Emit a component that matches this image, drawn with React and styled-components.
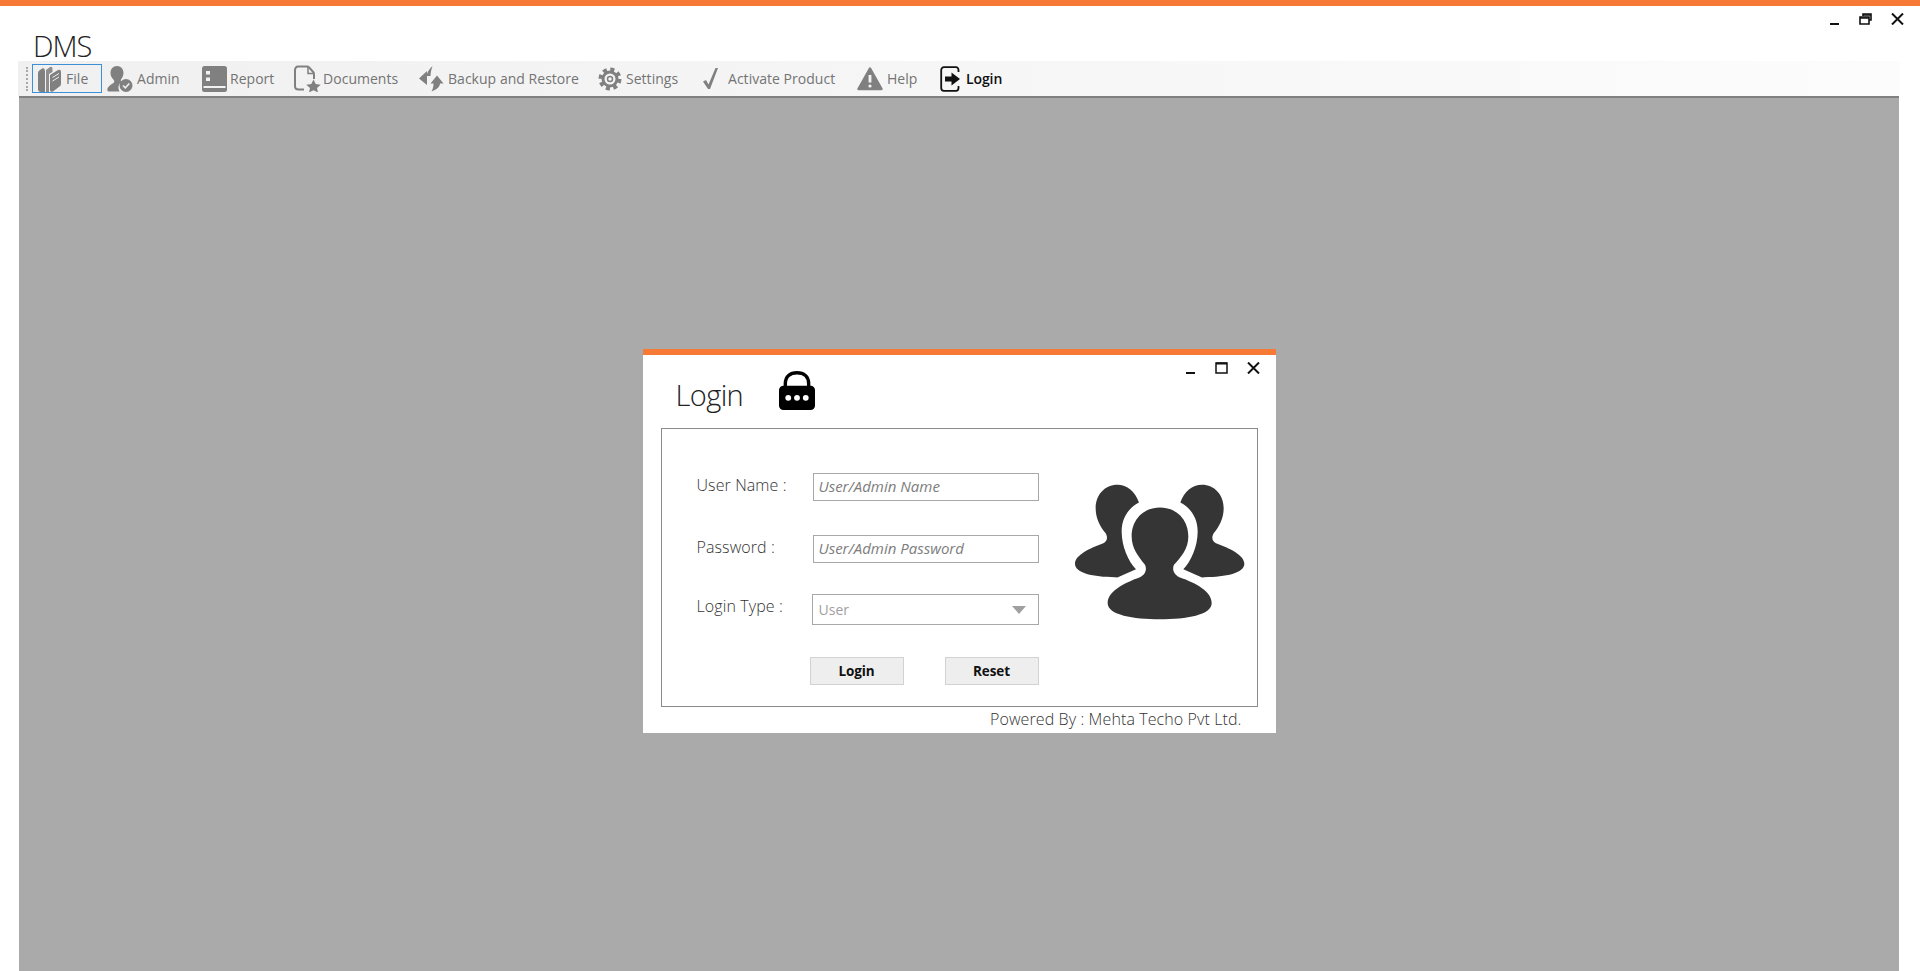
import styled, { createGlobalStyle } from 'styled-components'

const GlobalStyle = createGlobalStyle`
  html, body { margin: 0; padding: 0; background: #fff; }
  * { box-sizing: border-box; }
  body { font-family: "Open Sans", "Liberation Sans", sans-serif; }
`

const Page = styled.div`
  height: 100vh;
  display: flex;
  flex-direction: column;
  overflow: hidden;
  background: #fff;
`

const TopStripe = styled.div`
  height: 6px;
  flex: none;
  background: #f67a36;
`

const TitleRow = styled.div`
  height: 55px;
  flex: none;
  display: flex;
  justify-content: space-between;
  align-items: flex-start;
  padding: 7px 16px 0 33px;
`

const AppTitle = styled.h1`
  margin: 17px 0 0;
  font-size: 29px;
  line-height: 32px;
  font-weight: 300;
  color: #222;
  letter-spacing: -1px;
`

const WindowButtons = styled.div`
  display: flex;
  align-items: flex-start;
  gap: 19px;
`

const Toolbar = styled.div`
  height: 35px;
  flex: none;
  margin: 0 20px 0 18px;
  display: flex;
  align-items: center;
  padding-left: 8px;
  background: linear-gradient(90deg, #f0f0f0, #fcfcfc);
`

const Grip = styled.div`
  width: 2px;
  height: 24px;
  margin-right: 4px;
  border-left: 2px dotted #a8a8a8;
`

const ToolItem = styled.div`
  width: ${p => p.$width}px;
  height: 29px;
  flex: none;
  display: flex;
  align-items: center;
  font-size: 14px;
  color: ${p => (p.$active ? '#111' : '#747474')};
  font-weight: ${p => (p.$active ? 600 : 400)};
  letter-spacing: ${p => (p.$active ? '-0.1px' : '0.03px')};
`

const FileItem = styled(ToolItem)`
  padding-left: 5px;
  margin-right: 5px;
  border: 1.5px solid #3d8fd8;
`

const ToolIcon = styled.span`
  width: ${p => p.$width}px;
  flex: none;
  display: flex;
  align-items: center;
`

const Workspace = styled.main`
  flex: 1;
  margin: 0 21px 0 19px;
  padding-top: 251px;
  display: flex;
  justify-content: center;
  align-items: flex-start;
  background: #aaa;
  border-top: 2px solid #808080;
`

const Dialog = styled.section`
  width: 633px;
  height: 384px;
  display: flex;
  flex-direction: column;
  background: #fff;
  border-top: 6px solid #f67a36;
`

const DialogHead = styled.div`
  height: 73px;
  flex: none;
  display: flex;
  justify-content: space-between;
  align-items: flex-start;
  padding: 7px 16px 0 33px;
`

const DialogTitleGroup = styled.div`
  display: flex;
  align-items: flex-start;
  gap: 36px;
`

const DialogTitle = styled.h2`
  margin: 13px 0 0;
  font-size: 29px;
  line-height: 40px;
  font-weight: 300;
  letter-spacing: -0.6px;
  color: #222;
`

const LockWrap = styled.div`
  margin-top: 9px;
`

const FormBox = styled.div`
  height: 279px;
  margin: 0 18px;
  display: flex;
  align-items: flex-start;
  border: 1.5px solid #8a8a8a;
`

const FormGrid = styled.form`
  margin: 44px 0 0 35px;
  display: grid;
  grid-template-columns: 116px 228px;
  grid-template-rows: 62px 59px 63px 28px;
  align-items: start;
`

const FieldLabel = styled.label`
  font-size: 16px;
  line-height: 25px;
  font-weight: 300;
  color: #333;
  letter-spacing: 0.1px;
`

const TextField = styled.input`
  width: 226px;
  height: 28px;
  padding: 0 5px 2px;
  border: 1.5px solid #a8a8a8;
  outline: none;
  background: #fff;
  font-family: inherit;
  font-size: 15px;
  font-style: italic;
  &::placeholder { color: #7d7d7d; opacity: 1; }
`

const SelectField = styled.div`
  width: 227px;
  height: 31px;
  margin-left: -1px;
  padding: 0 12px 0 6px;
  display: flex;
  justify-content: space-between;
  align-items: center;
  border: 1.5px solid #a8a8a8;
  font-size: 14px;
  color: #a0a0a0;
`

const Caret = styled.span`
  width: 0;
  height: 0;
  border-left: 7px solid transparent;
  border-right: 7px solid transparent;
  border-top: 8px solid #a0a0a0;
`

const ButtonRow = styled.div`
  grid-column: 2;
  display: flex;
  justify-content: space-between;
  margin-left: -3px;
  width: 229px;
`

const ActionButton = styled.button`
  width: 94px;
  height: 28px;
  padding: 0;
  background: #eee;
  border: 1.5px solid #d2d2d2;
  font-family: inherit;
  font-size: 13.5px;
  font-weight: 700;
  letter-spacing: -0.1px;
  color: #111;
`

const PeopleWrap = styled.div`
  margin: 55px 0 0 34px;
`

const PoweredBy = styled.div`
  flex: 1;
  padding: 1px 34px 0 0;
  text-align: right;
  font-size: 16px;
  font-weight: 300;
  letter-spacing: 0.1px;
  color: #333;
`

const ctrl = { stroke: '#111', strokeWidth: 2, fill: 'none' }

const MinimizeIcon = () => (
  <svg width="10" height="13" viewBox="0 0 10 13"><path d="M0 11h9" {...ctrl} /></svg>
)

const CloseIcon = () => (
  <svg width="13" height="12" viewBox="0 0 13 12"><path d="M1 0.5l11 11M12 0.5l-11 11" {...ctrl} /></svg>
)

const RestoreIcon = () => (
  <svg width="13" height="12" viewBox="0 0 13 12">
    <path d="M4 3V1h8v6h-2" {...ctrl} strokeWidth="1.6" />
    <path d="M1 4h9v7H1z" {...ctrl} strokeWidth="1.6" />
    <path d="M1 5h9M4 2h8" {...ctrl} strokeWidth="1.6" />
  </svg>
)

const MaximizeIcon = () => (
  <svg width="13" height="12" viewBox="0 0 13 12">
    <path d="M1 1h11v10H1z" {...ctrl} strokeWidth="1.5" />
    <path d="M1 1.5h11" {...ctrl} />
  </svg>
)

const GREY = '#808080'

const BooksIcon = () => (
  <svg width="23" height="26" viewBox="0 0 23 26" fill={GREY}>
    <path d="M0 7Q0 5 2 4L5 2Q7 2.500 7 5V26H3Q0 26 0 23z" />
    <path d="M8 4L12 1Q14.500 0 14.500 3V6L11 8V26H8z" fill="#8e8e8e" />
    <path d="M12 9L20 4Q23 3 23 6V18Q23 19.500 21.500 20.500L15 25.500Q12 26.500 12 24z" />
    <path d="M14.500 11.500L21 7.500M14.500 15L21 11" stroke="#f0f0f0" strokeWidth="1" fill="none" />
  </svg>
)

const AdminIcon = () => (
  <svg width="26" height="26" viewBox="0 0 26 26" fill={GREY}>
    <path d="M10 0c4 0 6.500 3 6.500 7 0 3-1.500 5-2.500 6.500-.5 1 0 2 1 2.500-2.500 1-4 3.500-3.500 6.500.2 1 .5 2 1 3H2c-2 0-2-2.500-1-4 1.500-2.500 4-3.500 5.500-4.500 1-.8 1-2 .3-3C5 12 3.500 10 3.500 7 3.500 3 6 0 10 0z" />
    <circle cx="19" cy="19.500" r="6.500" />
    <path d="M16 19.500l2.300 2.300 4-4.300" stroke="#f0f0f0" strokeWidth="1.600" fill="none" />
  </svg>
)

const ReportIcon = () => (
  <svg width="25" height="26" viewBox="0 0 25 26">
    <rect x="0" y="0" width="25" height="26" rx="2.500" fill={GREY} />
    <rect x="4" y="5" width="4" height="3.500" fill="#f2f2f2" />
    <rect x="4" y="11.500" width="4" height="3.500" fill="#f2f2f2" />
    <rect x="1.500" y="20" width="22" height="2" fill="#f2f2f2" />
  </svg>
)

const DocumentsIcon = () => (
  <svg width="27" height="27" viewBox="0 0 27 27">
    <path d="M4 1.500h9c1 0 1.500.4 2.200 1l4 4.500c.6.7.8 1.300.8 2.200V14M10 24.500H4.500C2.500 24.500 1 23 1 21V5c0-2 1.500-3.500 3-3.500" fill="none" stroke={GREY} strokeWidth="2" />
    <path d="M14 2v6.500h6" fill="none" stroke={GREY} strokeWidth="1.500" />
    <path d="M19.500 14.500l2.200 4.600 5 .6-3.700 3.400 1 4.400-4.500-2.300-4.500 2.300 1-4.400-3.700-3.400 5-.6z" fill={GREY} />
  </svg>
)

const BackupIcon = () => (
  <svg width="25" height="26" viewBox="0 0 25 26" fill={GREY}>
    <path d="M0 12.500L8 5V8C9 5 11 2 13.500 0C12.500 3 11.500 6.500 11.500 10H8V19z" />
    <path d="M18 9.500L24.500 17.500H21C21 21 17 24 12.500 25.500C14 23 14.500 20 14.500 17.500H11.500z" />
  </svg>
)

const GearIcon = () => (
  <svg width="24" height="24" viewBox="0 0 24 24" fill="none">
    <circle cx="12" cy="12" r="9.500" stroke={GREY} strokeWidth="4" strokeDasharray="4 3.460" />
    <circle cx="12" cy="12" r="7" stroke={GREY} strokeWidth="3" />
    <circle cx="12" cy="12" r="2.500" stroke={GREY} strokeWidth="1.500" />
  </svg>
)

const CheckIcon = () => (
  <svg width="15" height="21" viewBox="0 0 15 21" fill={GREY}>
    <path d="M0 13.500l3-1.500 2.500 4.500L12.500 0H15L7 21H5z" />
  </svg>
)

const WarnIcon = () => (
  <svg width="26" height="24" viewBox="0 0 26 24">
    <path d="M13 1.500L24.500 22H1.500z" fill={GREY} stroke={GREY} strokeWidth="2.500" strokeLinejoin="round" />
    <path d="M13 8v7.500" stroke="#f4f4f4" strokeWidth="2.800" />
    <circle cx="13" cy="19" r="1.600" fill="#f4f4f4" />
  </svg>
)

const LoginDoorIcon = () => (
  <svg width="21" height="26" viewBox="0 0 21 26">
    <path d="M18.500 6V4c0-1.500-1-2.800-2.500-2.800H4C2.300 1.200 1.200 2.500 1.200 4v18c0 1.500 1.100 2.800 2.800 2.800h12c1.500 0 2.500-1.300 2.500-2.800v-2" fill="none" stroke="#111" strokeWidth="1.800" />
    <path d="M5 10.500h6.500V6.500L20 13l-8.500 6.500v-4H5z" fill="#111" />
  </svg>
)

const LockIcon = () => (
  <svg width="36" height="39" viewBox="0 0 37 40">
    <path d="M6.500 17V13C6.500 5.500 11.500 1.800 18.500 1.800S30.500 5.500 30.500 13v4" fill="none" stroke="#000" strokeWidth="3.500" />
    <rect x="0" y="15" width="37" height="25" rx="4.500" fill="#000" />
    <circle cx="9.500" cy="27.500" r="3" fill="#fff" />
    <circle cx="18.500" cy="27.500" r="3" fill="#fff" />
    <circle cx="27.500" cy="27.500" r="3" fill="#fff" />
  </svg>
)

const sideHead = 'M297 488C285 455 262 435 232 435C195 435 167 465 167 505C167 535 180 560 197 580C205 595 200 605 190 610C150 625 105 645 105 672C105 700 160 712 225 712L232 713L288 688C265 665 245 620 245 575C245 535 265 505 297 488Z'

const PeopleIcon = () => (
  <svg width="170" height="136" viewBox="105 433 510 407" fill="#353535">
    <path d={sideHead} />
    <path d={sideHead} transform="matrix(-1 0 0 1 718 0)" />
    <path d="M360 503C310 503 275 540 275 590C275 625 295 650 315 675C322 690 315 705 300 712C250 730 203 755 203 790C203 825 280 838 360 838C440 838 515 825 515 790C515 755 470 730 418 712C403 705 395 690 402 675C425 650 445 625 445 590C445 540 410 503 360 503Z" />
  </svg>
)

const tools = [
  { label: 'Admin', width: 95, icon: 30, Icon: AdminIcon },
  { label: 'Report', width: 92, icon: 28, Icon: ReportIcon },
  { label: 'Documents', width: 125, icon: 29, Icon: DocumentsIcon },
  { label: 'Backup and Restore', width: 179, icon: 29, Icon: BackupIcon },
  { label: 'Settings', width: 105, icon: 28, Icon: GearIcon },
  { label: 'Activate Product', width: 154, icon: 25, Icon: CheckIcon },
  { label: 'Help', width: 83, icon: 30, Icon: WarnIcon },
  { label: 'Login', width: 70, icon: 26, Icon: LoginDoorIcon, active: true },
]

export default function App() {
  return (
    <Page>
      <GlobalStyle />
      <TopStripe />
      <TitleRow>
        <AppTitle>DMS</AppTitle>
        <WindowButtons>
          <MinimizeIcon />
          <RestoreIcon />
          <CloseIcon />
        </WindowButtons>
      </TitleRow>
      <Toolbar>
        <Grip />
        <FileItem $width={70}>
          <ToolIcon $width={28}><BooksIcon /></ToolIcon>
          File
        </FileItem>
        {tools.map(({ label, width, icon, Icon, active }) => (
          <ToolItem key={label} $width={width} $active={active}>
            <ToolIcon $width={icon}><Icon /></ToolIcon>
            {label}
          </ToolItem>
        ))}
      </Toolbar>
      <Workspace>
        <Dialog>
          <DialogHead>
            <DialogTitleGroup>
              <DialogTitle>Login</DialogTitle>
              <LockWrap><LockIcon /></LockWrap>
            </DialogTitleGroup>
            <WindowButtons>
              <MinimizeIcon />
              <MaximizeIcon />
              <CloseIcon />
            </WindowButtons>
          </DialogHead>
          <FormBox>
            <FormGrid>
              <FieldLabel>User Name :</FieldLabel>
              <TextField placeholder="User/Admin Name" />
              <FieldLabel>Password :</FieldLabel>
              <TextField placeholder="User/Admin Password" />
              <FieldLabel>Login Type :</FieldLabel>
              <SelectField>User<Caret /></SelectField>
              <ButtonRow>
                <ActionButton type="button">Login</ActionButton>
                <ActionButton type="button">Reset</ActionButton>
              </ButtonRow>
            </FormGrid>
            <PeopleWrap><PeopleIcon /></PeopleWrap>
          </FormBox>
          <PoweredBy>Powered By : Mehta Techo Pvt Ltd.</PoweredBy>
        </Dialog>
      </Workspace>
    </Page>
  )
}
